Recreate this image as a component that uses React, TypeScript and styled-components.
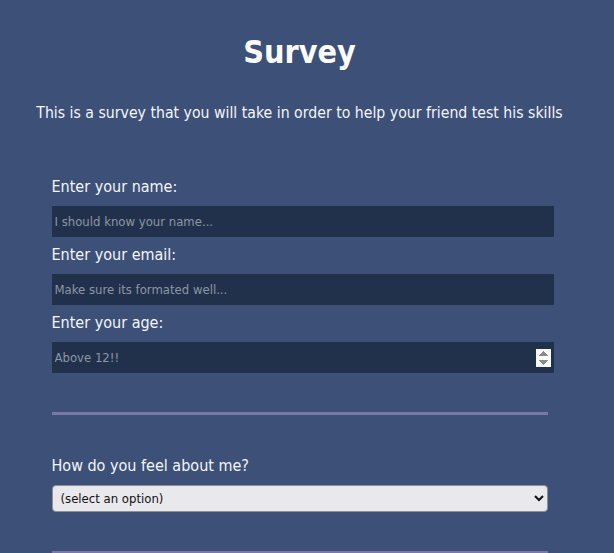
import { createGlobalStyle } from "styled-components";
import styled from "styled-components";

const GlobalStyle = createGlobalStyle`
    body {
        margin: 0;
        background-color: #3d5078;
        font-family: "DejaVu Sans Condensed", "DejaVu Sans", sans-serif;
        color: #f3f6fb;
    }
`

// the original page had a 15px scroll bar, so the content is centred on 599px
const Page = styled.main`
    width: calc(100% - 15px);
    display: flex;
    flex-direction: column;
    align-items: center;
    padding-top: 33px;
`

const Title = styled.h1`
    margin: 0;
    font-size: 32px;
    font-weight: 700;
    line-height: 38px;
    color: #ffffff;
`

const Description = styled.p`
    margin: 32px 0 0;
    font-size: 15.7px;
    line-height: 20px;
`

const Form = styled.form`
    width: 496px;
    margin-top: 54px;
    display: flex;
    flex-direction: column;
    align-items: start;

    hr {
        width: 100%;
        height: 3px;
        border: none;
        margin: 0;
        background-color: #7b78a8;
    }
`

const Label = styled.label`
    font-size: 16px;
    line-height: 20px;
    margin-bottom: 9px;
`

const Input = styled.input`
    width: 100%;
    height: 31px;
    padding: 0 3px;
    box-sizing: content-box;
    border: none;
    outline: none;
    margin: 0 0 8px;
    background-color: #21314c;
    color: #c8cdd6;
    font-family: inherit;
    font-size: 13px;

    &::placeholder {
        color: #8c96a6;
    }
    &::-webkit-inner-spin-button {
        opacity: 1;
        height: 18px;
        margin-right: 0px;
    }
`

const Divider = styled.div<{ $top: number, $bottom: number }>`
    width: 100%;
    margin-top: ${p => p.$top}px;
    margin-bottom: ${p => p.$bottom}px;
`

const Select = styled.select`
    width: 100%;
    height: 27px;
    padding: 0 4px;
    border: 1px solid #8f8f95;
    border-radius: 4px;
    background-color: #e9e8ec;
    color: #111;
    font-family: inherit;
    font-size: 13px;
`

const App = () => {
    return (
        <>
            <GlobalStyle/>
            <Page>
                <Title>Survey</Title>
                <Description>This is a survey that you will take in order to help your friend test his skills</Description>
                <Form>
                    <Label htmlFor="name">Enter your name:</Label>
                    <Input id="name" type="text" placeholder="I should know your name..."/>
                    <Label htmlFor="email">Enter your email:</Label>
                    <Input id="email" type="email" placeholder="Make sure its formated well..."/>
                    <Label htmlFor="age">Enter your age:</Label>
                    <Input id="age" type="number" placeholder="Above 12!!"/>
                    <Divider $top={31} $bottom={41}><hr/></Divider>
                    <Label htmlFor="feel">How do you feel about me?</Label>
                    <Select id="feel" defaultValue="">
                        <option value="">(select an option)</option>
                        <option value="love">I love you</option>
                        <option value="like">I like you</option>
                        <option value="meh">You're okay</option>
                    </Select>
                    <Divider $top={39} $bottom={40}><hr/></Divider>
                </Form>
            </Page>
        </>
    )
}

export default App;
